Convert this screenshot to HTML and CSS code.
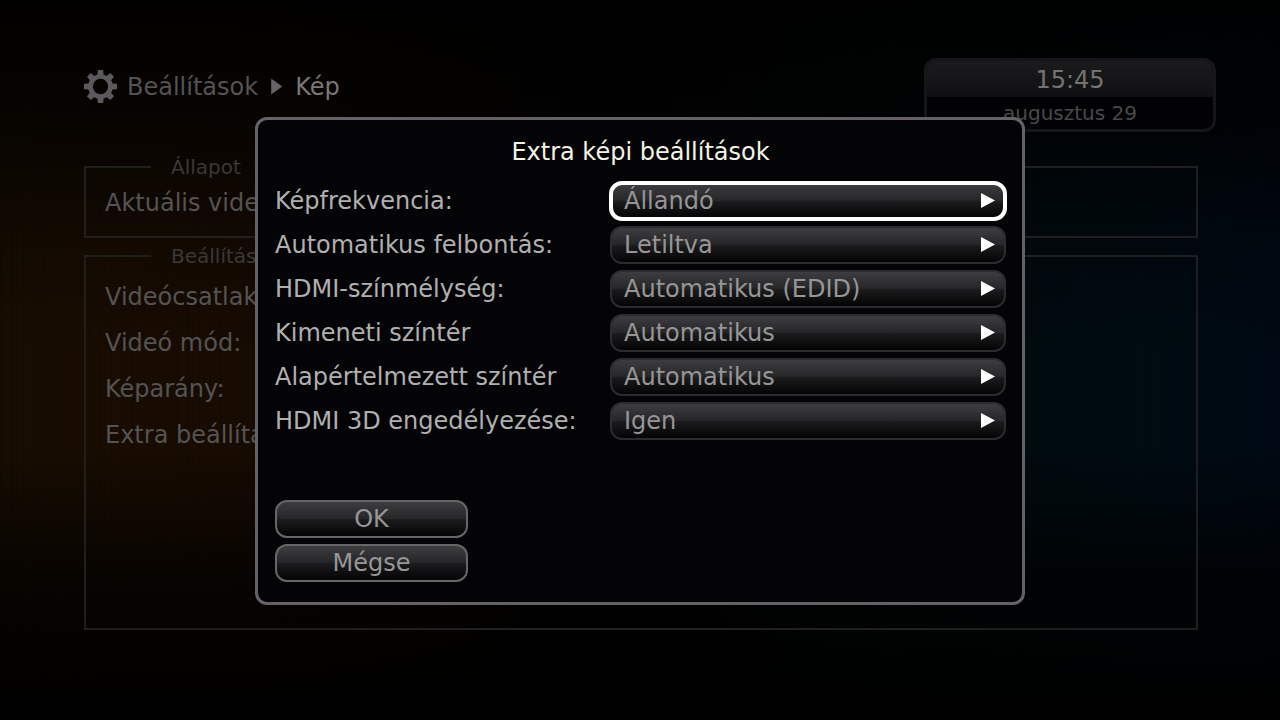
FILE: index.html
```html
<!DOCTYPE html>
<html lang="hu">
    <head>
        <meta charset="UTF-8">
        <meta name="viewport" content="width=device-width, initial-scale=1">
        <title>Beállítások - Kép</title>
        <link rel="stylesheet" href="styles.css">
    </head>
    <body>
        <!--settings page behind the dialog-->
        <div class="page">
            <header class="page-header">
                <nav class="breadcrumb">
                    <svg class="gear" viewBox="-16 -16 32 32" aria-hidden="true">
                        <circle r="9.7" fill="none" stroke="currentColor" stroke-width="4.6"/>
                        <g fill="currentColor">
                            <path id="teeth" d="M-2.6-16H2.6L3-11H-3ZM-2.6 16H2.6L3 11H-3ZM-16-2.6V2.6L-11 3V-3ZM16-2.6V2.6L11 3V-3Z"/>
                            <use href="#teeth" transform="rotate(45)"/>
                        </g>
                    </svg>
                    <span>Beállítások</span>
                    <span class="crumb-arrow"></span>
                    <span class="crumb-current">Kép</span>
                </nav>
                <div class="clock">
                    <div class="clock-time">15:45</div>
                    <div class="clock-date">augusztus 29</div>
                </div>
            </header>

            <main class="groups">
                <fieldset class="group">
                    <legend>Állapot</legend>
                    <div class="group-row">Aktuális videó</div>
                </fieldset>
                <fieldset class="group group-main">
                    <legend>Beállítás</legend>
                    <div class="group-row">Videócsatlak</div>
                    <div class="group-row">Videó mód:</div>
                    <div class="group-row">Képarány:</div>
                    <div class="group-row">Extra beállítás</div>
                </fieldset>
            </main>
        </div>

        <!--extra picture settings dialog-->
        <div class="overlay">
            <form class="dialog" role="dialog" aria-labelledby="dialog-title">
                <h1 class="dialog-title" id="dialog-title">Extra képi beállítások</h1>

                <div class="options">
                    <div class="option">
                        <label for="framerate">Képfrekvencia:</label>
                        <div class="picker">
                            <select id="framerate" class="active"><option>Állandó</option></select>
                        </div>
                    </div>
                    <div class="option">
                        <label for="resolution">Automatikus felbontás:</label>
                        <div class="picker">
                            <select id="resolution"><option>Letiltva</option></select>
                        </div>
                    </div>
                    <div class="option">
                        <label for="depth">HDMI-színmélység:</label>
                        <div class="picker">
                            <select id="depth"><option>Automatikus (EDID)</option></select>
                        </div>
                    </div>
                    <div class="option">
                        <label for="output-space">Kimeneti színtér</label>
                        <div class="picker">
                            <select id="output-space"><option>Automatikus</option></select>
                        </div>
                    </div>
                    <div class="option">
                        <label for="default-space">Alapértelmezett színtér</label>
                        <div class="picker">
                            <select id="default-space"><option>Automatikus</option></select>
                        </div>
                    </div>
                    <div class="option">
                        <label for="hdmi-3d">HDMI 3D engedélyezése:</label>
                        <div class="picker">
                            <select id="hdmi-3d"><option>Igen</option></select>
                        </div>
                    </div>
                </div>

                <div class="actions">
                    <button type="button">OK</button>
                    <button type="button">Mégse</button>
                </div>
            </form>
        </div>
    </body>
</html>
```
FILE: styles.css
```css
* {
    box-sizing: border-box;
}

body {
    margin: 0;
    min-height: 100vh;
    font-family: Verdana, "DejaVu Sans", sans-serif;
    font-size: 24px;
    line-height: 32px;
    color: #545354;
    /*dark wood: brown glow on the left, blue on the right*/
    background:
        linear-gradient(rgba(0, 0, 0, 0.95) 0%, rgba(0, 0, 0, 0.75) 15%, rgba(0, 0, 0, 0.2) 35%, transparent 50%, transparent 62%, rgba(0, 0, 0, 0.7) 80%, #000 100%),
        repeating-linear-gradient(90deg, rgba(0, 0, 0, 0.12) 0 2px, transparent 2px 5px, rgba(0, 0, 0, 0.06) 5px 6px, transparent 6px 11px),
        linear-gradient(90deg, #180d01 0%, #190c01 10%, #180b01 20%, #040303 48%, #000b0f 80%, #000b12 90%, #000914 100%);
}

.page {
    min-height: 100vh;
    padding: 58px 64px 90px 84px;
    display: flex;
    flex-direction: column;
}

.page-header {
    display: flex;
    justify-content: space-between;
    align-items: flex-start;
}

.breadcrumb {
    display: flex;
    align-items: center;
    padding-top: 12px;
}

.gear {
    width: 33px;
    height: 33px;
    margin-right: 10px;
    color: #5a595c;
}

.crumb-arrow {
    width: 11px;
    height: 16px;
    margin: 0 13px;
    background: #656466;
    clip-path: polygon(0 0, 100% 50%, 0 100%);
}

.crumb-current {
    color: #7a7976;
}

/*clock box in the top right corner*/
.clock {
    width: 292px;
    border: 3px solid #161618;
    border-radius: 12px;
    text-align: center;
    background: #020204;
    overflow: hidden;
}

.clock-time {
    height: 36px;
    line-height: 38px;
    color: #75736f;
    background: linear-gradient(#1b1b1e, #101013);
}

.clock-date {
    height: 32px;
    line-height: 32px;
    font-size: 20px;
    color: #4a494a;
}

.groups {
    flex: 1;
    display: flex;
    flex-direction: column;
    gap: 6px;
    margin-top: 23px;
    margin-right: 18px;
}

.group {
    margin: 0;
    padding: 8px 19px 17px;
    border: 2px solid #201f1f;
}

.group legend {
    margin-left: 46px;
    padding: 0 20px;
    font-size: 20px;
    line-height: 24px;
    color: #3a3838;
}

.group-main {
    flex: 1;
    padding-top: 13px;
}

.group-row {
    margin-bottom: 14px;
}

.group-row:last-child {
    margin-bottom: 0;
}

/*dialog*/
.overlay {
    position: fixed;
    inset: 0;
    display: flex;
    align-items: center;
    justify-content: center;
    padding-top: 2px;
}

.dialog {
    width: 770px;
    max-width: 100%;
    padding: 16px 16px 20px 17px;
    border: 3px solid #656266;
    border-radius: 12px;
    background: #040406;
}

.dialog-title {
    margin: 0 0 14px;
    font-size: 24px;
    font-weight: normal;
    text-align: center;
    color: #f4f4e4;
}

.options {
    display: flex;
    flex-direction: column;
    gap: 6px;
}

.option {
    display: flex;
    align-items: center;
    justify-content: space-between;
    color: #b0b0b0;
}

.picker {
    position: relative;
    width: 396px;
}

/*white arrow over the right end of the picker*/
.picker::after {
    content: "";
    position: absolute;
    top: 11px;
    right: 11px;
    width: 14px;
    height: 15px;
    background: #fff;
    clip-path: polygon(0 0, 100% 50%, 0 100%);
    pointer-events: none;
}

select,
button {
    display: block;
    height: 38px;
    border: 2px solid #2c2c2e;
    border-radius: 12px;
    font: inherit;
    line-height: 32px;
    color: #969696;
    background: linear-gradient(#404042 0%, #272729 48%, #1b1b1d 52%, #040405 95%) border-box;
}

select {
    appearance: none;
    width: 100%;
    padding: 0 36px 0 12px;
}

select.active,
select:focus {
    outline: 4px solid #fff;
    outline-offset: -3px;
}

.actions {
    display: flex;
    flex-direction: column;
    gap: 6px;
    margin-top: 60px;
}

button {
    width: 193px;
    padding: 0;
    border-color: #666;
}
```
